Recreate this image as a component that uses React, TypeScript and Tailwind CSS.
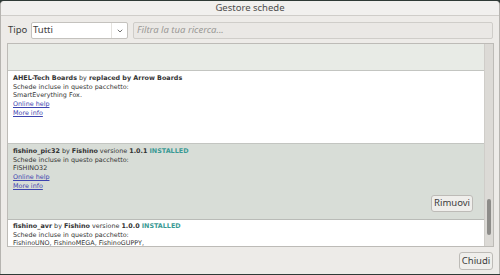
import { ChevronDown } from 'lucide-react';

const UI = { fontFamily: '"Noto Sans", "DejaVu Sans", sans-serif' };
const MONO = { fontFamily: '"DejaVu Sans", sans-serif' };

function Links() {
  return (
    <>
      <div>
        <span className="text-[#3d44b0] underline">Online help</span>
      </div>
      <div>
        <span className="text-[#3d44b0] underline">More info</span>
      </div>
    </>
  );
}

export default function App() {
  return (
    <div className="w-[500px] h-[275px] bg-[#2f3a36] overflow-hidden">
      <div
        className="w-[500px] h-[273px] mt-px bg-[#edebe8] rounded-t-[4px] border-l border-r border-[#b6b4b0] flex flex-col text-[#3c3c3c]"
        style={UI}
      >
        {/* Title bar */}
        <div className="h-[15px] shrink-0 flex items-center justify-center text-[9.5px] text-[#4d4d4d] bg-[#f1f0ee] border-b border-[#cfcdc9] rounded-t-[4px]">
          Gestore schede
        </div>

        {/* Toolbar */}
        <div className="flex items-center mt-[6px] pl-[7px] pr-[6px] h-[17px] shrink-0">
          <span className="text-[9.5px] w-[23px]">Tipo</span>
          <div className="w-[97px] h-[17px] bg-white border border-[#c4c2be] rounded-[2px] flex items-center text-[9.5px]">
            <span className="flex-1 pl-[1px]">Tutti</span>
            <div className="w-[16px] h-full flex items-center justify-center border-l border-[#e4e2de]">
              <ChevronDown size={8} strokeWidth={2.5} className="text-[#555]" />
            </div>
          </div>
          <div className="flex-1 ml-[5px] h-[17px] bg-[#eae8e5] border border-[#cfcdc9] rounded-[2px] flex items-center pl-[3px] text-[9.5px] italic text-[#9a9996]">
            Filtra la tua ricerca...
          </div>
        </div>

        {/* Board list */}
        <div className="mt-[4px] ml-[6px] mr-[5px] h-[204px] shrink-0 border border-[#bdbbb7] flex overflow-hidden">
          <div className="flex-1 flex flex-col text-[6.4px] leading-[8.7px] text-[#333] overflow-hidden" style={MONO}>
            <div className="h-[27px] shrink-0 bg-[#e8ebe6] border-b border-[#c3c5c1]" />
            <div className="h-[73px] shrink-0 bg-white border-b border-[#c3c5c1] pl-[5px] pt-[3px]">
              <div>
                <b>AHEL-Tech Boards</b> by <b>replaced by Arrow Boards</b>
              </div>
              <div>Schede incluse in questo pacchetto:</div>
              <div>SmartEverything Fox.</div>
              <Links />
            </div>
            <div className="h-[76px] shrink-0 bg-[#d8ddd7] border-b border-[#b9bbb7] pl-[5px] pt-[3px] flex flex-col">
              <div>
                <b>fishino_pic32</b> by <b>Fishino</b> versione <b>1.0.1</b>{' '}
                <b className="text-[#3a9a94]">INSTALLED</b>
              </div>
              <div>Schede incluse in questo pacchetto:</div>
              <div>FISHINO32</div>
              <Links />
              <div className="flex justify-end mt-[4px] pr-[11px]">
                <button
                  className="w-[42px] h-[17px] bg-[#efeeeb] border border-[#bdbbb7] rounded-[3px] text-[9.5px] leading-none text-[#3c3c3c]"
                  style={UI}
                >
                  Rimuovi
                </button>
              </div>
            </div>
            <div className="flex-1 bg-white pl-[5px] pt-[2px]">
              <div>
                <b>fishino_avr</b> by <b>Fishino</b> versione <b>1.0.0</b>{' '}
                <b className="text-[#3a9a94]">INSTALLED</b>
              </div>
              <div>Schede incluse in questo pacchetto:</div>
              <div>FishinoUNO, FishinoMEGA, FishinoGUPPY,</div>
            </div>
          </div>
          {/* Scrollbar */}
          <div className="w-[9px] shrink-0 bg-[#dcdad6] border-l border-[#cfcdc9] flex flex-col">
            <div className="h-[155px]" />
            <div className="mx-auto w-[4px] h-[36px] rounded-full bg-[#8d8c89]" />
          </div>
        </div>

        {/* Footer */}
        <div className="flex justify-end mt-[5px] pr-[6px]">
          <button className="w-[34px] h-[18px] bg-[#efeeeb] border border-[#bdbbb7] rounded-[3px] text-[9.5px] leading-none text-[#3c3c3c]">
            Chiudi
          </button>
        </div>
      </div>
    </div>
  );
}
